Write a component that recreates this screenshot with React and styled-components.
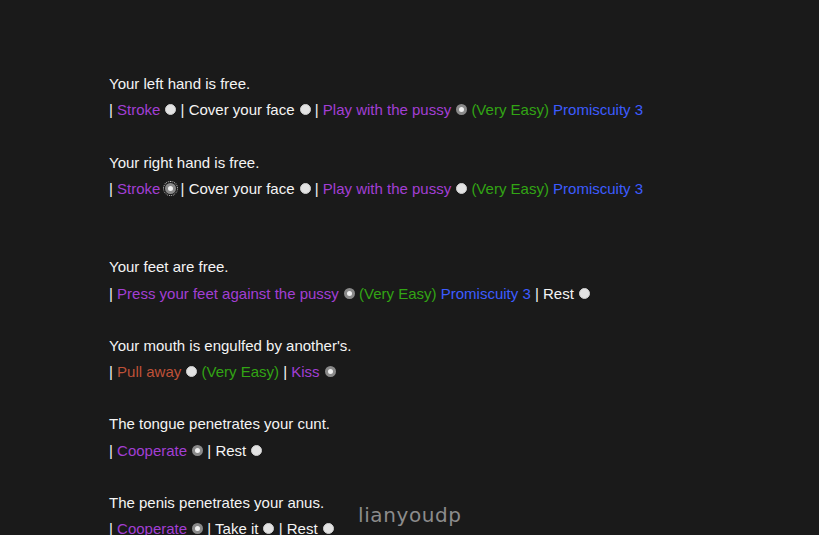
import React from 'react';
import styled, { createGlobalStyle } from 'styled-components';

const GlobalStyle = createGlobalStyle`
    html, body {
        margin: 0;
        padding: 0;
        background: #1a1a1a;
    }
    body {
        font-family: "Liberation Sans", Arial, sans-serif;
        font-size: 15px;
        color: #f4f4f4;
    }
`

const Page = styled.div`
    position: relative;
    width: 819px;
    height: 535px;
    overflow: hidden;
    background: #1a1a1a;
    padding: 71px 0 0 109px;
    box-sizing: border-box;
`

const Line = styled.div`
    height: 26.2px;
    line-height: 26.2px;
    white-space: nowrap;
    margin-bottom: ${props => props.gap ? `${props.gap * 26.2}px` : '0'};
`

const Opt = styled.span`
    color: ${props => props.color || '#f4f4f4'};
`

const Radio = styled.span`
    display: inline-block;
    width: 11px;
    height: 11px;
    border-radius: 50%;
    box-sizing: border-box;
    vertical-align: 0px;
    margin-left: 5px;
    background: ${props => props.checked ? '#f0f0f0' : '#e3e3e3'};
    border: ${props => props.checked ? '3px solid #8a8a8a' : '1px solid #cfcfcf'};
    outline: ${props => props.focus ? '1px dotted #cccccc' : 'none'};
    outline-offset: 1px;
`

const Watermark = styled.div`
    position: absolute;
    left: 358px;
    top: 503px;
    font-family: "DejaVu Sans", "Noto Sans", sans-serif;
    font-size: 20px;
    letter-spacing: 0.6px;
    color: #8c8c8c;
`

const PURPLE = '#a23fd4'
const GREEN = '#32a514'
const BLUE = '#3d5cff'
const RED = '#be5138'

const Sep = () => <span> | </span>

const App = () => (
    <Page>
        <GlobalStyle />
        <Line>Your left hand is free.</Line>
        <Line gap={1}>
            | <Opt color={PURPLE}>Stroke</Opt><Radio /><Sep />Cover your face<Radio /><Sep />
            <Opt color={PURPLE}>Play with the pussy</Opt><Radio checked /> <Opt color={GREEN}>(Very Easy)</Opt> <Opt color={BLUE}>Promiscuity 3</Opt>
        </Line>

        <Line>Your right hand is free.</Line>
        <Line gap={2}>
            | <Opt color={PURPLE}>Stroke</Opt><Radio checked focus /><Sep />Cover your face<Radio /><Sep />
            <Opt color={PURPLE}>Play with the pussy</Opt><Radio /> <Opt color={GREEN}>(Very Easy)</Opt> <Opt color={BLUE}>Promiscuity 3</Opt>
        </Line>

        <Line>Your feet are free.</Line>
        <Line gap={1}>
            | <Opt color={PURPLE}>Press your feet against the pussy</Opt><Radio checked /> <Opt color={GREEN}>(Very Easy)</Opt> <Opt color={BLUE}>Promiscuity 3</Opt><Sep />Rest<Radio />
        </Line>

        <Line>Your mouth is engulfed by another's.</Line>
        <Line gap={1}>
            | <Opt color={RED}>Pull away</Opt><Radio /> <Opt color={GREEN}>(Very Easy)</Opt><Sep /><Opt color={PURPLE}>Kiss</Opt><Radio checked />
        </Line>

        <Line>The tongue penetrates your cunt.</Line>
        <Line gap={1}>
            | <Opt color={PURPLE}>Cooperate</Opt><Radio checked /><Sep />Rest<Radio />
        </Line>

        <Line>The penis penetrates your anus.</Line>
        <Line>
            | <Opt color={PURPLE}>Cooperate</Opt><Radio checked /><Sep />Take it<Radio /><Sep />Rest<Radio />
        </Line>

        <Watermark>lianyoudp</Watermark>
    </Page>
);

export default App;
